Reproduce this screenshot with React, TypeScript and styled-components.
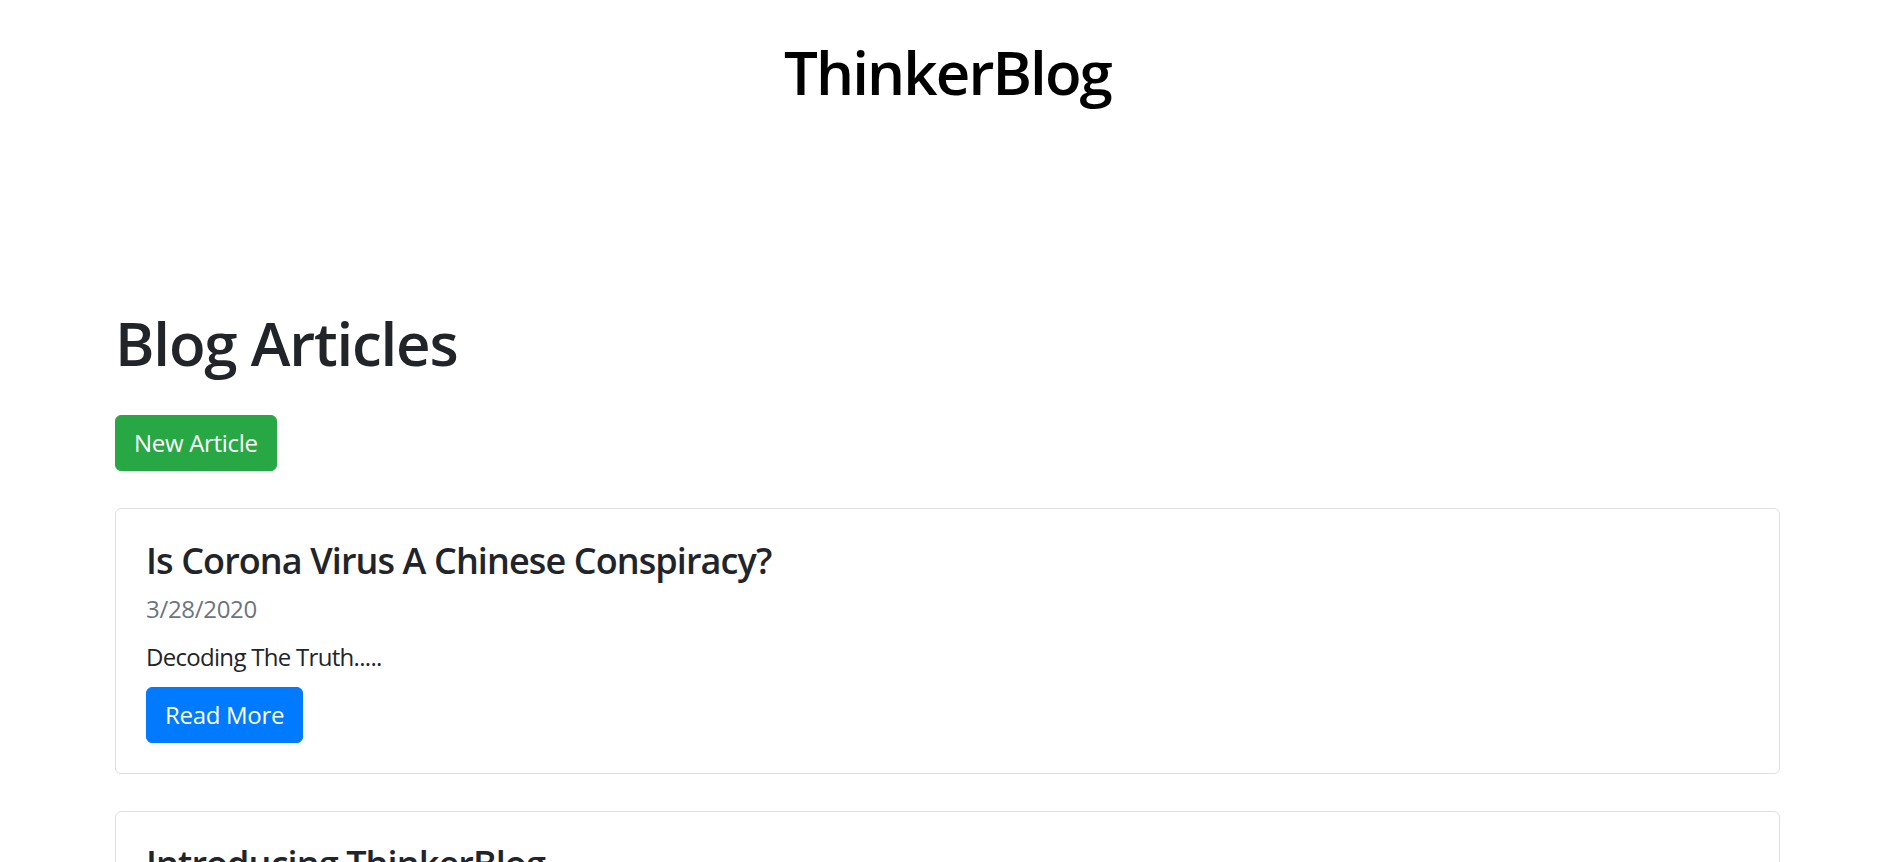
import React from "react";
import styled, { createGlobalStyle } from "styled-components";

const GlobalStyle = createGlobalStyle`
  html { scrollbar-width: none; }
  html::-webkit-scrollbar { display: none; }
  *, *::before, *::after { box-sizing: border-box; }
  body {
    margin: 0;
    background: #fff;
    color: #212529;
    font-family: "Open Sans", "Noto Sans", sans-serif;
    font-size: 24px;
    line-height: 1.5;
    letter-spacing: -0.3px;
  }
`;

const Header = styled.header`
  padding-top: 36px;
  text-align: center;
`;

const SiteTitle = styled.h1`
  margin: 0;
  font-size: 60px;
  font-weight: 600;
  line-height: 1.2;
  letter-spacing: -1.9px;
  color: #000;
`;

const Container = styled.main`
  max-width: 1710px;
  margin: 0 auto;
  padding: 199px 22.5px 0;
`;

const PageTitle = styled.h1`
  margin: 0 0 36px;
  font-size: 60px;
  font-weight: 600;
  line-height: 1.2;
  letter-spacing: -1.2px;
`;

const Button = styled.a<{ $variant: "success" | "primary" }>`
  display: inline-block;
  padding: 9px 18px;
  font-size: 24px;
  line-height: 36px;
  color: #fff;
  text-decoration: none;
  border-radius: 6px;
  border: 1.5px solid ${(p) => (p.$variant === "success" ? "#28a745" : "#007bff")};
  background: ${(p) => (p.$variant === "success" ? "#28a745" : "#007bff")};
  cursor: pointer;
`;

const ArticleList = styled.div`
  display: flex;
  flex-direction: column;
  gap: 37px;
  margin-top: 37px;
`;

const Card = styled.article`
  border: 1.5px solid #dfdfdf;
  border-radius: 6px;
  background: #fff;
  padding: 30px;
`;

const CardTitle = styled.h4`
  margin: 0 0 9px;
  font-size: 36px;
  font-weight: 600;
  line-height: 1.2;
  letter-spacing: -0.9px;
`;

const CardDate = styled.div`
  color: #6c757d;
  margin-bottom: 12px;
`;

const CardText = styled.p`
  margin: 0 0 12px;
  letter-spacing: -0.7px;
`;

const articles = [
  {
    title: "Is Corona Virus A Chinese Conspiracy?",
    date: "3/28/2020",
    description: "Decoding The Truth.....",
  },
  {
    title: "Introducing ThinkerBlog",
    date: "3/27/2020",
    description: "A place for thinkers.....",
  },
];

export default function App() {
  return (
    <>
      <GlobalStyle />
      <Header>
        <SiteTitle>ThinkerBlog</SiteTitle>
      </Header>
      <Container>
        <PageTitle>Blog Articles</PageTitle>
        <Button $variant="success">New Article</Button>
        <ArticleList>
          {articles.map((a) => (
            <Card key={a.title}>
              <CardTitle>{a.title}</CardTitle>
              <CardDate>{a.date}</CardDate>
              <CardText>{a.description}</CardText>
              <Button $variant="primary">Read More</Button>
            </Card>
          ))}
        </ArticleList>
      </Container>
    </>
  );
}
